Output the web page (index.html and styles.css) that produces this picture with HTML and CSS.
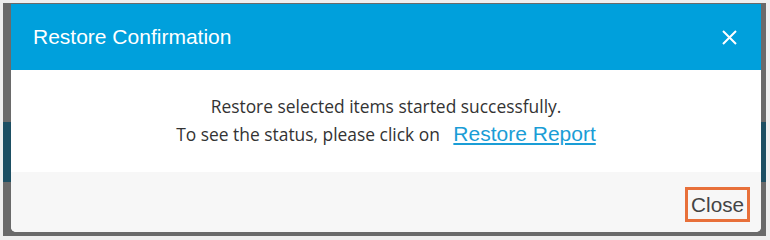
FILE: index.html
```html
<!DOCTYPE html>
<html>
<head>
<meta charset="utf-8">
<link rel="stylesheet" href="styles.css">
</head>
<body>
<div class="backdrop">
  <div class="dialog">
    <div class="header">
      <h1 class="title">Restore Confirmation</h1>
      <button class="x-btn" aria-label="Close">
        <svg width="15" height="15" viewBox="0 0 15 15"><path d="M1 1 L14 14 M14 1 L1 14" stroke="#fff" stroke-width="2" fill="none"/></svg>
      </button>
    </div>
    <div class="body">
      <p class="line">Restore selected items started successfully.</p>
      <p class="line">To see the status, please click on <a class="link" href="#">Restore Report</a></p>
    </div>
    <div class="footer">
      <button class="close-btn">Close</button>
    </div>
  </div>
</div>
</body>
</html>
```
FILE: styles.css
```css
html, body {
  margin: 0;
  padding: 0;
}
body {
  background: #efefef;
  width: 770px;
  height: 240px;
  overflow: hidden;
}
.backdrop {
  margin: 3px 4px 0 3px;
  height: 233px;
  box-sizing: border-box;
  padding: 1px 5px 4px 8px;
  background:
    linear-gradient(to bottom, transparent 119px, #1d4f63 119px, #1d4f63 179px, transparent 179px),
    #6a6a6a;
}
.dialog {
  display: flex;
  flex-direction: column;
  height: 228px;
  border-radius: 0 0 5px 5px;
  overflow: hidden;
  background: #fff;
}
.header {
  background: #00a0dc;
  height: 66px;
  display: flex;
  align-items: center;
  justify-content: space-between;
  padding: 0 24px 0 22px;
}
.title {
  margin: 0;
  font-family: "Liberation Sans", Arial, sans-serif;
  font-weight: normal;
  font-size: 21px;
  color: #fff;
  padding-bottom: 1px;
}
.x-btn {
  background: none;
  border: 0;
  padding: 0;
  width: 15px;
  height: 15px;
  display: flex;
}
.body {
  height: 102px;
  display: flex;
  flex-direction: column;
  align-items: center;
  justify-content: center;
  font-family: "Open Sans", sans-serif;
  font-size: 17.4px;
  color: #333;
  padding-bottom: 2px;
  box-sizing: border-box;
}
.line {
  margin: 0;
  line-height: 28px;
}
.link {
  font-family: "Liberation Sans", Arial, sans-serif;
  font-size: 21px;
  color: #1a9dd6;
  text-decoration: underline;
  margin-left: 9px;
}
.footer {
  flex: 1;
  background: #f7f7f7;
  display: flex;
  justify-content: flex-end;
  align-items: flex-start;
  padding: 15px 11px 0 0;
}
.close-btn {
  font-family: "Liberation Sans", Arial, sans-serif;
  font-size: 20.7px;
  color: #444;
  background: transparent;
  border: 3px solid #e8703a;
  height: 35px;
  padding: 0 3px;
  line-height: 29px;
}
```
